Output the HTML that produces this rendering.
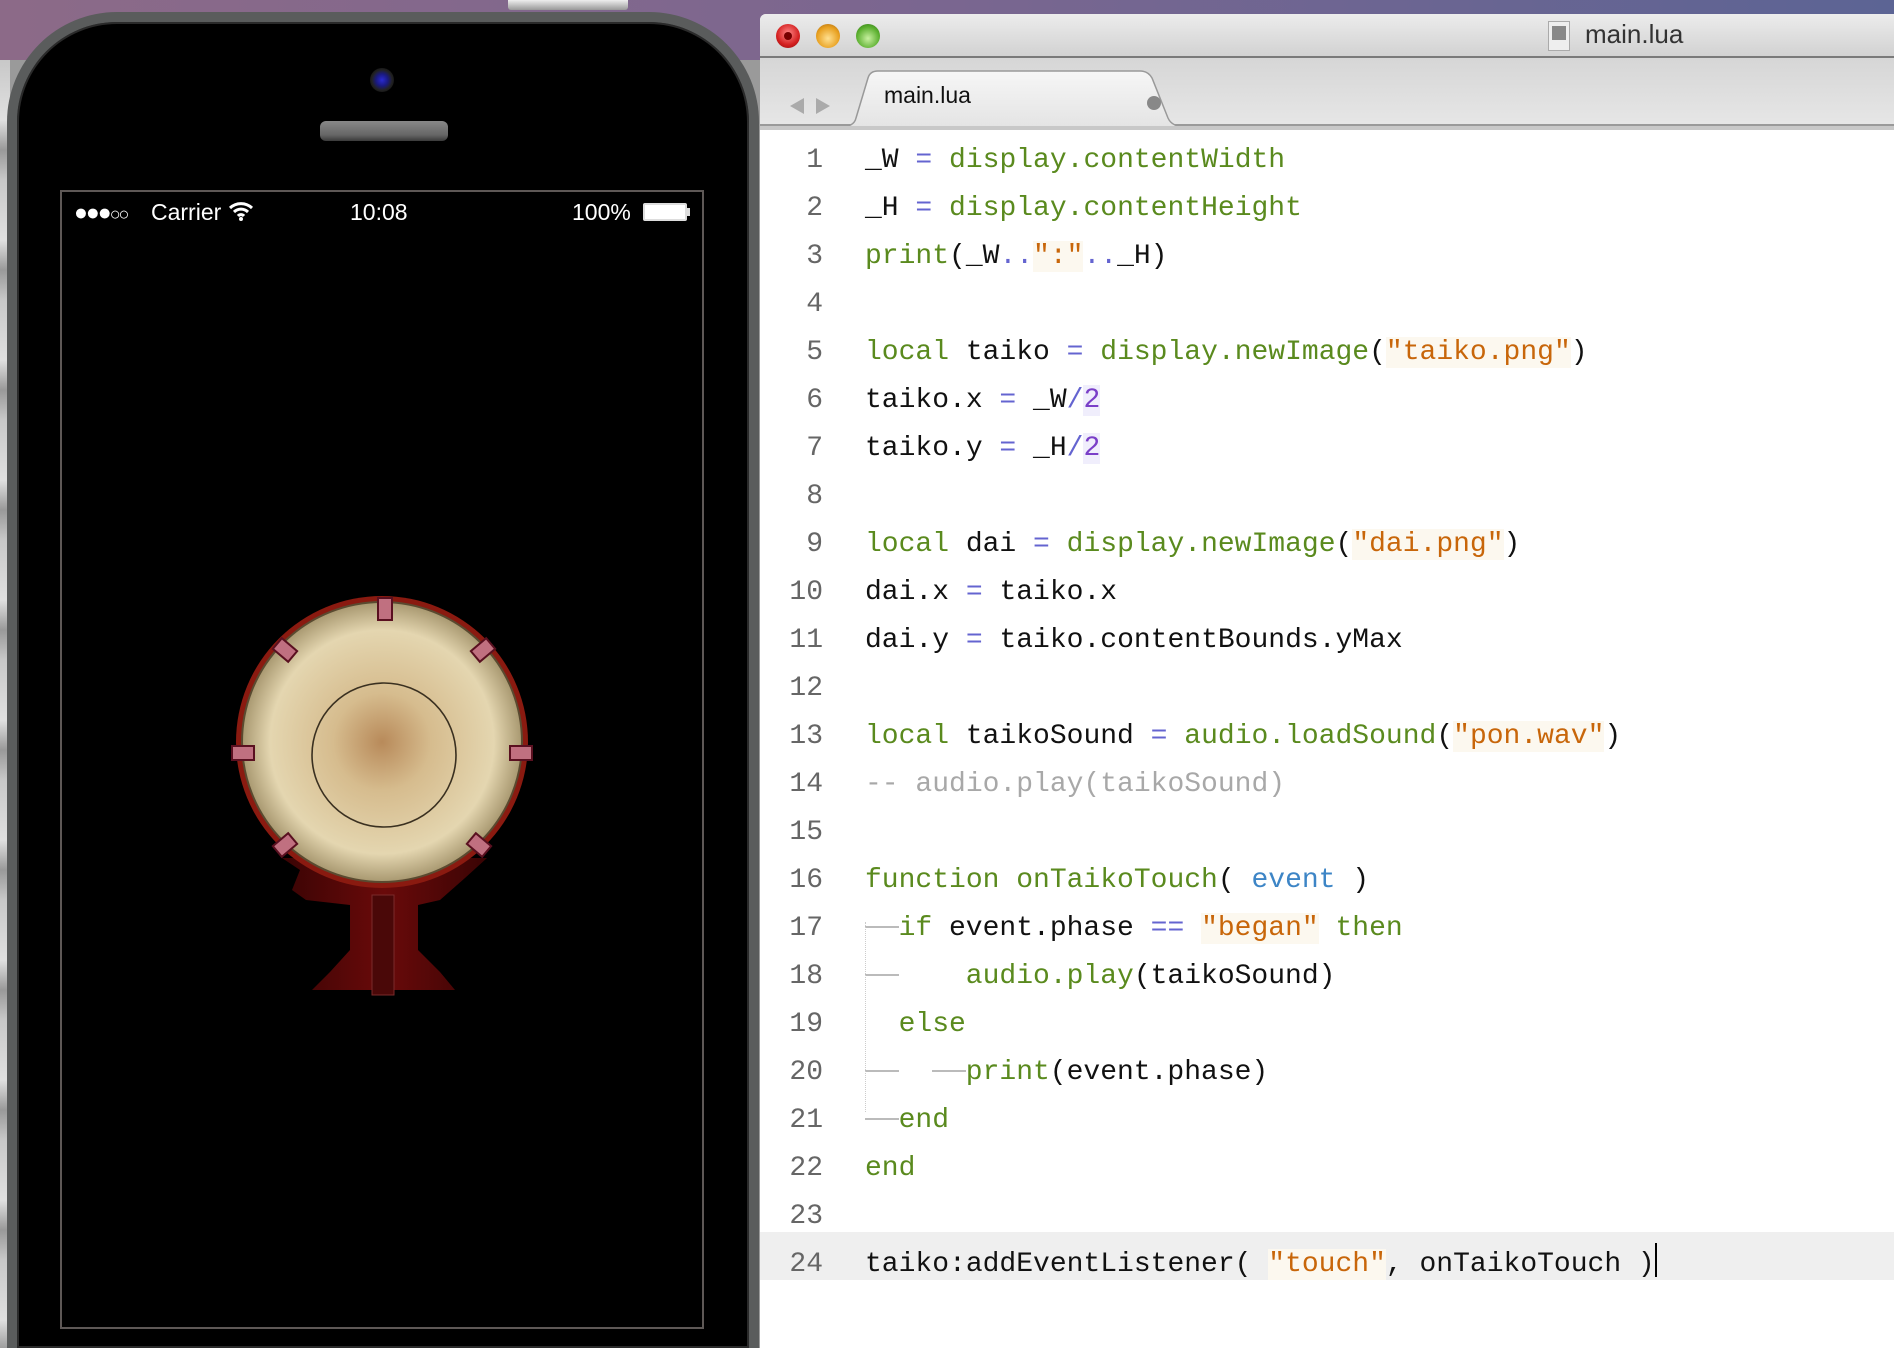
<!DOCTYPE html>
<html style="width:1894px;height:1348px;overflow:hidden"><head><meta charset="utf-8"><style>
*{margin:0;padding:0;box-sizing:border-box}
html,body{width:1894px;height:1348px;overflow:hidden}
body{position:relative;background:#9a9a9a;font-family:"Liberation Sans",sans-serif}
.abs{position:absolute}
#purple{left:0;top:0;width:1894px;height:60px;background:linear-gradient(90deg,#8c6a88 0%,#7a6690 50%,#5c6494 100%)}
#leftstrip{left:0;top:60px;width:10px;height:1288px;background:repeating-linear-gradient(180deg,#c8c8c8 0,#e0e0e0 60px,#999 90px,#c8c8c8 120px)}
#phone{left:7px;top:12px;width:752px;height:1336px;border-radius:110px 110px 0 0;background:#000;border:10px solid #5a5c5c;border-bottom:none;box-shadow:inset 0 0 0 2px #2a2a2a}
#screen{left:60px;top:190px;width:644px;height:1139px;border:2px solid #5e5856;background:#000}
.sb{color:#fff;font-size:23px;top:199px;font-family:"Liberation Sans",sans-serif}
#editor{left:760px;top:14px;width:1134px;height:1334px;background:#fff;border-radius:6px 0 0 0;overflow:hidden}
#title{left:0;top:0;width:1134px;height:44px;background:linear-gradient(#ececec,#d2d2d2);border-bottom:2px solid #7a7a7a}
#tabbar{left:0;top:44px;width:1134px;height:68px;background:linear-gradient(#d6d6d6,#e6e6e6);border-bottom:2px solid #9a9a9a}
#line2{left:0;top:112px;width:1134px;height:4px;background:#c8c8c8}
.tl{width:24px;height:24px;border-radius:50%;top:10px}
.ln{position:absolute;left:0;width:63px;text-align:right;color:#666}
.cl{position:absolute;left:105px;white-space:pre;color:#111}
.g{color:#5a8a1e}.o{color:#c8660a}.b{color:#6464d0}.n{color:#7a3fc8;background:#f0eefc}.e{color:#3d85c6}.c{color:#a8a8a8}
.s{background:#fcf8ef}
.ws{display:inline-block;width:33.6px;height:1px;border-bottom:2px solid #bbb;vertical-align:0.25em}
.ws0{display:inline-block;width:33.6px}
</style></head><body>
<div id="purple" class="abs"></div>
<div id="leftstrip" class="abs"></div>
<div class="abs" style="left:508px;top:0;width:120px;height:10px;background:linear-gradient(#eee,#999);border-radius:0 0 3px 3px"></div>
<div id="phone" class="abs"></div>
<div class="abs" style="left:370px;top:68px;width:24px;height:24px;border-radius:50%;background:radial-gradient(#2a2ad0 0,#1a1a80 35%,#222 60%,#000 100%)"></div>
<div class="abs" style="left:320px;top:121px;width:128px;height:20px;border-radius:6px;background:linear-gradient(#888,#666 70%,#3a3a3a)"></div>
<div id="screen" class="abs"></div>
<div class="abs sb" style="left:74px;letter-spacing:-2px">●●●<span style="font-size:18px">○○</span></div>
<div class="abs sb" style="left:151px">Carrier</div>
<svg class="abs" style="left:228px;top:200px" width="26" height="22" viewBox="0 0 26 22"><path d="M2 8a16 16 0 0 1 22 0M6 12a10 10 0 0 1 14 0M10 16a4 4 0 0 1 6 0" stroke="#fff" stroke-width="3" fill="none"/><circle cx="13" cy="19" r="2" fill="#fff"/></svg>
<div class="abs sb" style="left:350px">10:08</div>
<div class="abs sb" style="left:572px">100%</div>
<div class="abs" style="left:643px;top:203px;width:44px;height:18px;border:2px solid #ddd;background:#fff;border-radius:2px"></div>
<div class="abs" style="left:687px;top:208px;width:3px;height:8px;background:#ddd"></div>
<svg class="abs" style="left:220px;top:580px" width="330" height="430" viewBox="220 580 330 430">
<defs>
<radialGradient id="head" cx="0.5" cy="0.5" r="0.5"><stop offset="0" stop-color="#b88a5a"/><stop offset="0.35" stop-color="#d6bc8e"/><stop offset="0.8" stop-color="#e4d6b0"/><stop offset="1" stop-color="#a89870"/></radialGradient>
<linearGradient id="wood" x1="0" x2="1"><stop offset="0" stop-color="#3a0404"/><stop offset="0.5" stop-color="#6a0a0a"/><stop offset="1" stop-color="#3a0404"/></linearGradient>
</defs>
<path d="M282 858 L300 870 L292 890 L306 900 L350 905 L350 950 L330 972 L312 990 L455 990 L440 972 L418 950 L418 905 L440 900 L465 878 L487 858 Z" fill="url(#wood)"/>
<rect x="372" y="895" width="22" height="100" fill="#4a0808" stroke="#7a2a2a"/>
<circle cx="382" cy="742" r="146" fill="#8a1a10"/>
<circle cx="382" cy="742" r="140" fill="url(#head)" stroke="#5a4a30" stroke-width="2"/>
<circle cx="384" cy="755" r="72" fill="none" stroke="#3a3020" stroke-width="1.6"/>
<g fill="#c07080" stroke="#5a1020" stroke-width="2">
<rect x="378" y="598" width="14" height="22"/><rect x="232" y="746" width="22" height="14"/><rect x="510" y="746" width="22" height="14"/>
<rect x="275" y="643" width="20" height="14" transform="rotate(40 285 650)"/><rect x="473" y="643" width="20" height="14" transform="rotate(-40 483 650)"/>
<rect x="275" y="838" width="20" height="14" transform="rotate(-40 285 845)"/><rect x="469" y="838" width="20" height="14" transform="rotate(40 479 845)"/>
</g>
</svg>

<div id="editor" class="abs">
<div id="title" class="abs"></div>
<div class="abs tl" style="left:16px;background:radial-gradient(circle at 50% 40%,#f88 0,#d42020 60%,#8a0a0a)"><div style="position:absolute;left:8px;top:8px;width:8px;height:8px;border-radius:50%;background:#700"></div></div>
<div class="abs tl" style="left:56px;background:radial-gradient(circle at 50% 60%,#ffe090 0,#e8a020 60%,#a06010)"></div>
<div class="abs tl" style="left:96px;background:radial-gradient(circle at 50% 60%,#c8f0a0 0,#5cb030 60%,#2a7010)"></div>
<div class="abs" style="left:788px;top:7px;width:22px;height:30px;background:#eee;border:1px solid #aaa"><div style="margin:4px 3px;width:14px;height:14px;background:#888"></div></div>
<div class="abs" style="left:825px;top:5px;font-size:26px;color:#333">main.lua</div>
<div id="tabbar" class="abs"></div>
<div class="abs" style="left:30px;top:84px;width:0;height:0;border-top:8px solid transparent;border-bottom:8px solid transparent;border-right:14px solid #aaa"></div>
<div class="abs" style="left:56px;top:84px;width:0;height:0;border-top:8px solid transparent;border-bottom:8px solid transparent;border-left:14px solid #aaa"></div>
<svg class="abs" style="left:80px;top:56px" width="380" height="58"><defs><linearGradient id="tg" x1="0" y1="0" x2="0" y2="1"><stop offset="0" stop-color="#f6f6f6"/><stop offset="1" stop-color="#e4e4e4"/></linearGradient></defs><path d="M0 57 Q14 57 16 48 L28 8 Q30 1 38 1 L300 1 Q308 1 312 8 L328 48 Q332 57 346 57 L380 57" fill="url(#tg)" stroke="#999" stroke-width="1.5"/></svg>
<div class="abs" style="left:124px;top:68px;font-size:23px;color:#111">main.lua</div>
<div class="abs" style="left:387px;top:82px;width:14px;height:14px;border-radius:50%;background:#888"></div>
<div id="line2" class="abs"></div>
<div class="abs" style="left:0;top:1218px;width:1134px;height:48px;background:#efefef"></div>
</div>
<div class="abs" style="left:760px;top:137px;width:1134px;font-family:'Liberation Mono',monospace;font-size:28px;line-height:48px">
<div class="ln" style="top:0">1</div><div class="cl" style="top:0">_W <span class="b">=</span> <span class="g">display.contentWidth</span></div>
<div class="ln" style="top:48px">2</div><div class="cl" style="top:48px">_H <span class="b">=</span> <span class="g">display.contentHeight</span></div>
<div class="ln" style="top:96px">3</div><div class="cl" style="top:96px"><span class="g">print</span>(_W<span class="b">..</span><span class="o s">":"</span><span class="b">..</span>_H)</div>
<div class="ln" style="top:144px">4</div>
<div class="ln" style="top:192px">5</div><div class="cl" style="top:192px"><span class="g">local</span> taiko <span class="b">=</span> <span class="g">display.newImage</span>(<span class="o s">"taiko.png"</span>)</div>
<div class="ln" style="top:240px">6</div><div class="cl" style="top:240px">taiko.x <span class="b">=</span> _W<span class="b">/</span><span class="n">2</span></div>
<div class="ln" style="top:288px">7</div><div class="cl" style="top:288px">taiko.y <span class="b">=</span> _H<span class="b">/</span><span class="n">2</span></div>
<div class="ln" style="top:336px">8</div>
<div class="ln" style="top:384px">9</div><div class="cl" style="top:384px"><span class="g">local</span> dai <span class="b">=</span> <span class="g">display.newImage</span>(<span class="o s">"dai.png"</span>)</div>
<div class="ln" style="top:432px">10</div><div class="cl" style="top:432px">dai.x <span class="b">=</span> taiko.x</div>
<div class="ln" style="top:480px">11</div><div class="cl" style="top:480px">dai.y <span class="b">=</span> taiko.contentBounds.yMax</div>
<div class="ln" style="top:528px">12</div>
<div class="ln" style="top:576px">13</div><div class="cl" style="top:576px"><span class="g">local</span> taikoSound <span class="b">=</span> <span class="g">audio.loadSound</span>(<span class="o s">"pon.wav"</span>)</div>
<div class="ln" style="top:624px">14</div><div class="cl c" style="top:624px">-- audio.play(taikoSound)</div>
<div class="ln" style="top:672px">15</div>
<div class="ln" style="top:720px">16</div><div class="cl" style="top:720px"><span class="g">function onTaikoTouch</span>( <span class="e">event</span> )</div>
<div class="ln" style="top:768px">17</div><div class="cl" style="top:768px"><span class="ws"></span><span class="g">if</span> event.phase <span class="b">==</span> <span class="o s">"began"</span> <span class="g">then</span></div>
<div class="ln" style="top:816px">18</div><div class="cl" style="top:816px"><span class="ws"></span><span class="ws0"></span><span class="ws0"></span><span class="g">audio.play</span>(taikoSound)</div>
<div class="ln" style="top:864px">19</div><div class="cl" style="top:864px"><span class="ws0"></span><span class="g">else</span></div>
<div class="ln" style="top:912px">20</div><div class="cl" style="top:912px"><span class="ws"></span><span class="ws0"></span><span class="ws"></span><span class="g">print</span>(event.phase)</div>
<div class="ln" style="top:960px">21</div><div class="cl" style="top:960px"><span class="ws"></span><span class="g">end</span></div>
<div class="ln" style="top:1008px">22</div><div class="cl" style="top:1008px"><span class="g">end</span></div>
<div class="ln" style="top:1056px">23</div>
<div class="ln" style="top:1104px">24</div><div class="cl" style="top:1104px">taiko:addEventListener( <span class="o s">"touch"</span>, onTaikoTouch )<span style="display:inline-block;width:2px;height:34px;background:#000;vertical-align:-6px"></span></div>
</div>
<div class="abs" style="left:865px;top:922px;width:1px;height:190px;border-left:1px dotted #ccc"></div>
</body></html>
